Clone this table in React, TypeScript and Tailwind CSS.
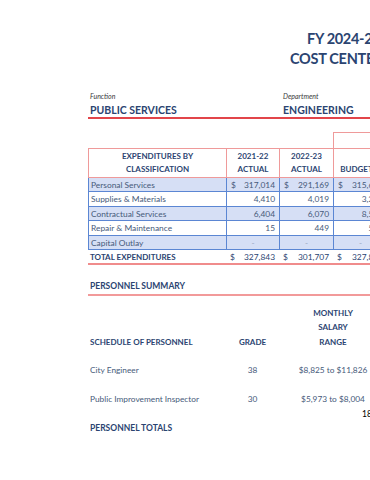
import React from 'react';

const rows = [
  { label: 'Personal Services', a: '317,014', b: '291,169', c: '315,620', dollar: true },
  { label: 'Supplies & Materials', a: '4,410', b: '4,019', c: '3,250' },
  { label: 'Contractual Services', a: '6,404', b: '6,070', c: '8,500' },
  { label: 'Repair & Maintenance', a: '15', b: '449', c: '500' },
  { label: 'Capital Outlay', a: '-', b: '-', c: '-' },
];

const staff = [
  { title: 'City Engineer', grade: '38', range: '$8,825 to $11,826' },
  { title: 'Public Improvement Inspector', grade: '30', range: '$5,973 to $8,004' },
];

function Money({ value, dollar }: { value: string; dollar?: boolean }) {
  if (value === '-') {
    return <div className="flex-1 text-center text-[#9aa8c0]">-</div>;
  }
  return (
    <div className="flex-1 flex justify-between px-[4px]">
      <span>{dollar ? '$' : ''}</span>
      <span>{value}</span>
    </div>
  );
}

export default function App() {
  return (
    <div className="w-[370px] h-[480px] overflow-hidden bg-white font-['Lato',sans-serif]">
      <div className="w-[560px] pl-[88px] pt-[29px]">
        {/* Title */}
        <div className="text-[14.5px] font-bold leading-[20px] tracking-[-0.3px] text-[#2b4471] whitespace-nowrap">
          <div className="pl-[219px]">FY 2024-25 BUDGET</div>
          <div className="pl-[202px]">COST CENTER SUMMARY</div>
        </div>

        {/* Function / Department */}
        <div className="mt-[22px] border-b-2 border-[#e2454a]">
          <div className="grid grid-cols-[193px_1fr] pl-[2px] text-[7px] italic leading-[10px] text-[#3a3a3a]">
            <span>Function</span>
            <span>Department</span>
          </div>
          <div className="grid grid-cols-[193px_1fr] mt-[2px] pl-[2px] text-[10.5px] font-bold leading-[14px] text-[#2b4471]">
            <span>PUBLIC SERVICES</span>
            <span>ENGINEERING</span>
          </div>
        </div>

        {/* Expenditures table */}
        <div className="mt-[13px] text-[8.4px] text-[#465a7a]">
          <div className="flex">
            <div className="w-[245px]" />
            <div className="w-[160px] h-[16px] border-x border-t border-[#ef9a9a]" />
          </div>
          <div className="grid grid-cols-[138px_53px_54px_54px_54px] border-y border-[#ef9a9a] text-[8px] font-bold text-[#2b4471] text-center leading-[13px]">
            <div className="border-l border-[#ef9a9a] py-[1px]">EXPENDITURES BY<br />CLASSIFICATION</div>
            <div className="border-l border-[#ef9a9a] py-[1px]">2021-22<br />ACTUAL</div>
            <div className="border-l border-[#ef9a9a] py-[1px]">2022-23<br />ACTUAL</div>
            <div className="border-l border-[#ef9a9a] py-[1px] pr-[8px]"><br />BUDGET</div>
            <div className="border-l border-[#ef9a9a] py-[1px]"><br />ESTIMATE</div>
          </div>
          {rows.map((r, i) => (
            <div
              key={r.label}
              className={`grid grid-cols-[138px_53px_54px_54px_54px] h-[14.4px] leading-[14px] border-b border-[#5b86d3] ${i % 2 === 0 ? 'bg-[#d6dff5]' : 'bg-white'}`}
            >
              <div className="border-l border-[#5b86d3] pl-[2px] whitespace-nowrap">{r.label}</div>
              <div className="border-l border-[#5b86d3] flex"><Money value={r.a} dollar={r.dollar} /></div>
              <div className="border-l border-[#5b86d3] flex"><Money value={r.b} dollar={r.dollar} /></div>
              <div className="border-l border-[#5b86d3] flex"><Money value={r.c} dollar={r.dollar} /></div>
              <div className="border-l border-[#5b86d3] flex"><Money value={r.c} dollar={r.dollar} /></div>
            </div>
          ))}
          <div className="grid grid-cols-[138px_53px_54px_54px_54px] h-[15px] leading-[14px] border-b-2 border-[#f08c8c] text-[#2b4471]">
            <div className="pl-[2px] text-[8px] font-bold">TOTAL EXPENDITURES</div>
            <div className="flex"><Money value="327,843" dollar /></div>
            <div className="flex"><Money value="301,707" dollar /></div>
            <div className="flex"><Money value="327,870" dollar /></div>
            <div className="flex"><Money value="327,870" dollar /></div>
          </div>
        </div>

        {/* Personnel summary */}
        <div className="mt-[15px] border-b-2 border-[#f29a9a] text-[8.5px] font-bold leading-[13px] text-[#2b4471] pl-[2px] pb-[1px]">
          PERSONNEL SUMMARY
        </div>

        <div className="mt-[10px] grid grid-cols-[138px_53px_108px_100px] text-[8px] leading-[14.5px] text-[#2b4471] font-bold">
          <div className="pl-[2px] self-end">SCHEDULE OF PERSONNEL</div>
          <div className="text-center self-end">GRADE</div>
          <div className="text-center">MONTHLY<br />SALARY<br />RANGE</div>
          <div />
        </div>

        <div className="mt-[14px] text-[8.3px] leading-[14.5px] text-[#465a7a]">
          {staff.map((s) => (
            <div key={s.title} className="grid grid-cols-[138px_53px_108px_100px] mb-[14.5px]">
              <div className="pl-[2px]">{s.title}</div>
              <div className="text-center">{s.grade}</div>
              <div className="text-center">{s.range}</div>
              <div />
            </div>
          ))}
        </div>
        <div className="-mt-[14.5px] grid grid-cols-[138px_53px_83px_100px] text-[8.5px] leading-[14.5px]">
          <div />
          <div />
          <div />
          <div className="text-black">18</div>
        </div>
        <div className="text-[8.5px] font-bold leading-[14.5px] text-[#2b4471] pl-[2px]">PERSONNEL TOTALS</div>
      </div>
    </div>
  );
}
